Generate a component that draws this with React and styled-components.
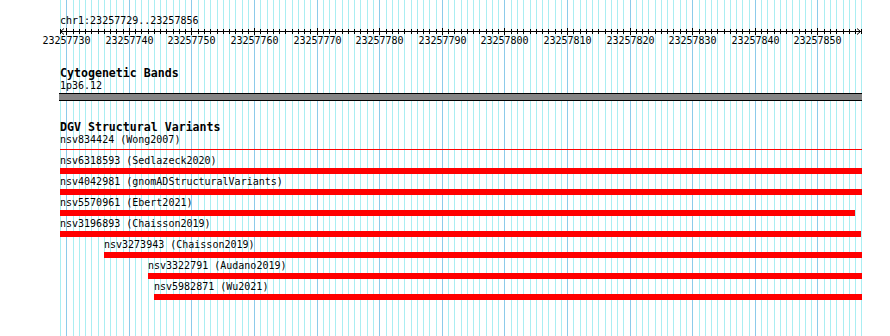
import React from "react";
import styled, { createGlobalStyle } from "styled-components";

const START = 23257729;
const BP = 128;
const PX = 6.26;
const WIDTH = 802;

const GlobalStyle = createGlobalStyle`
  html, body {
    margin: 0;
    padding: 0;
    background: #ffffff;
  }
  body {
    font-family: "DejaVu Sans Mono", "Liberation Mono", monospace;
    font-size: 10px;
    color: #000;
  }
`;

const Page = styled.div`
  width: 890px;
  height: 336px;
  overflow: hidden;
  padding-left: 60px;
  box-sizing: border-box;
`;

const Canvas = styled.div`
  position: relative;
  width: ${WIDTH}px;
  height: 336px;
`;

const GridLayer = styled.svg`
  position: absolute;
  left: 0;
  top: 0;
  z-index: 0;
`;

const Content = styled.div`
  position: relative;
  z-index: 1;
  display: flex;
  flex-direction: column;
`;

const RulerLabel = styled.div`
  margin-top: 15px;
  height: 12px;
  line-height: 12px;
  font-size: 10px;
  white-space: nowrap;
`;

const RulerSvg = styled.svg`
  display: block;
  overflow: visible;
`;

const Track = styled.section`
  display: flex;
  flex-direction: column;
  margin-top: ${(p) => p.$top}px;
`;

const TrackTitle = styled.div`
  height: 14px;
  line-height: 14px;
  font-size: 11.6px;
  font-weight: bold;
  white-space: nowrap;
`;

const Label = styled.div`
  height: 12px;
  line-height: 12px;
  font-size: 10px;
  white-space: nowrap;
`;

const BandBar = styled.div`
  margin-top: 1px;
  height: 8px;
  box-sizing: border-box;
  border-top: 1px solid #000;
  border-bottom: 1px solid #000;
  background: #858585;
  margin-left: -1px;
  width: ${WIDTH + 1}px;
`;

const ThinLine = styled.div`
  margin-top: 3px;
  height: 1px;
  background: #ff0000;
`;

const Feature = styled.div`
  display: flex;
  flex-direction: column;
  padding-top: ${(p) => (p.$first ? 5 : 0)}px;
  padding-bottom: 2px;
`;

const Bar = styled.div`
  margin-top: 1px;
  height: 6px;
  background: #ff0000;
`;

const features = [
  { id: "nsv6318593", src: "Sedlazeck2020", from: 0, to: 802 },
  { id: "nsv4042981", src: "gnomADStructuralVariants", from: 0, to: 802 },
  { id: "nsv5570961", src: "Ebert2021", from: 0, to: 795 },
  { id: "nsv3196893", src: "Chaisson2019", from: 0, to: 801 },
  { id: "nsv3273943", src: "Chaisson2019", from: 44, to: 802 },
  { id: "nsv3322791", src: "Audano2019", from: 88, to: 802 },
  { id: "nsv5982871", src: "Wu2021", from: 94, to: 802 },
];

const lineX = (k) => Math.round(k * PX) + 0.5;

function Grid() {
  const lines = [];
  for (let k = 0; k <= BP; k++) {
    const major = (START + k) % 10 === 0;
    lines.push(
      <line
        key={k}
        x1={lineX(k)}
        x2={lineX(k)}
        y1={0}
        y2={336}
        stroke={major ? "#8ccbea" : "#aaeef2"}
        strokeWidth={1}
      />
    );
  }
  return (
    <GridLayer width={WIDTH} height={336}>
      {lines}
    </GridLayer>
  );
}

function Ruler() {
  const ticks = [];
  const labels = [];
  for (let k = 0; k <= BP; k++) {
    const pos = START + k;
    const major = pos % 10 === 0;
    const x = lineX(k);
    ticks.push(
      <line key={k} x1={x} x2={x} y1={major ? 1 : 2} y2={major ? 8 : 7} stroke="#000" />
    );
    if (major && pos < START + BP) {
      labels.push(
        <text key={k} x={x} y={16.5} textAnchor="middle" fontSize="10" fontFamily="DejaVu Sans Mono, Liberation Mono, monospace">
          {pos}
        </text>
      );
    }
  }
  return (
    <RulerSvg width={WIDTH} height={20}>
      <line x1={0} x2={WIDTH - 1} y1={4.5} y2={4.5} stroke="#000" />
      <polyline points="4,1.5 0.5,4.5 4,7.5" fill="none" stroke="#000" />
      <polyline points={`${WIDTH - 5},1.5 ${WIDTH - 1.5},4.5 ${WIDTH - 5},7.5`} fill="none" stroke="#000" />
      {ticks}
      {labels}
    </RulerSvg>
  );
}

export default function App() {
  return (
    <Page>
      <GlobalStyle />
      <Canvas>
        <Grid />
        <Content>
          <RulerLabel>chr1:23257729..23257856</RulerLabel>
          <Ruler />
          <Track $top={19}>
            <TrackTitle>Cytogenetic Bands</TrackTitle>
            <Label>1p36.12</Label>
            <BandBar />
          </Track>
          <Track $top={19}>
            <TrackTitle>DGV Structural Variants</TrackTitle>
            <Label>nsv834424 (Wong2007)</Label>
            <ThinLine />
            {features.map((f, i) => (
              <Feature
                key={f.id}
                $first={i === 0}
                style={{ marginLeft: f.from, width: f.to - f.from }}
              >
                <Label>
                  {f.id} ({f.src})
                </Label>
                <Bar />
              </Feature>
            ))}
          </Track>
        </Content>
      </Canvas>
    </Page>
  );
}
